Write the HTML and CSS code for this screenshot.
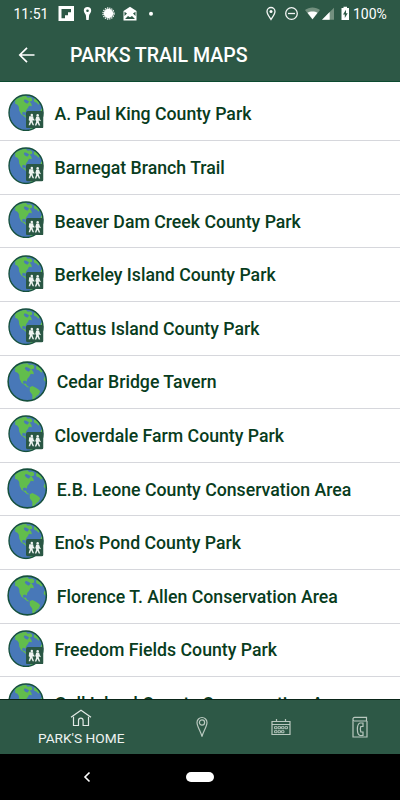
FILE: index.html
```html
<!DOCTYPE html>
<html lang="en">
<head>
<meta charset="utf-8">
<title>Parks Trail Maps</title>
<link rel="stylesheet" href="styles.css">
</head>
<body>
<svg class="defs" aria-hidden="true">
  <symbol id="globe" viewBox="0 0 40 40" preserveAspectRatio="none">
    <circle cx="20" cy="20" r="18.900" fill="#4878b8"/>
    <path fill="#62bd4c" d="M8 5.500 12 4 16 2.500 20 2.200 22 4 25 3.500 27 5 26.500 7.500 24 8 26 10.500 26.500 13 23.500 12.500 22 15 20 17.500 19.500 20 17.500 19 15.500 20 16.500 22.500 18.500 22 20 24.500 22.500 25.500 20 25.500 17.500 23.500 14.500 21.500 12.500 17.500 12 13.500 10.500 11.500 8 10.500Z"/>
    <path fill="#62bd4c" d="M22.500 25.500 25 24.500 28.500 26 31.500 28 32.700 29.500 31.500 32.500 29 34.500 26.500 37.500 25 37.500 25 33 22.500 29.500ZM29.500 4.500 32.500 6.500 35 10 34 11.500 31.500 9 29.500 8.500 28.500 6.500ZM37 15 38.500 18 37.800 20.500 36.200 18Z"/>
    <path fill="#4878b8" d="M18.500 5.500 21 6.500 23.500 8 21.500 10.500 19 9 17.500 7.500Z"/>
    <circle cx="20" cy="20" r="18.900" fill="none" stroke="#16503c" stroke-width="1.500"/>
  </symbol>
  <symbol id="hikers" viewBox="0 0 18 18">
    <rect width="18" height="18" rx="2" fill="#2a5744"/>
    <g fill="#eef3f0">
      <circle cx="6" cy="4" r="1.300"/><circle cx="12" cy="4.500" r="1.300"/>
      <path d="M3.300 5.500H7.300L7.800 8 9 9.300 8.300 10 6.900 9.200V11L8.300 14.700H6.800L5.400 11.500 4.200 14.700H2.700L4 10.300 2.800 9.500Z"/>
      <path d="M10.500 6H13.500L14.300 8.500 15.300 9.800 14.600 10.500 13.200 9.500V11L14.600 15H13.100L11.800 12 10.600 15H9.100L10.500 10.700 9.600 9Z"/>
    </g>
  </symbol>
</svg>
<div class="screen">
  <header class="top">
    <div class="status">
      <span class="clock">11:51</span>
      <svg class="status-left" viewBox="0 0 100 18">
        <rect x=".5" y="1" width="15.500" height="15" fill="#fff"/><path fill="#2d5846" d="M3.500 4H13V7.300H10V10.300H7V13.300H3.500Z"/>
        <path fill="#fff" fill-rule="evenodd" d="M29.500 2a3.700 3.700 0 0 1 3.700 3.700c0 2-1.800 3-2.100 4.700L30.700 15h-2.400L27.900 10.400C27.600 8.700 25.800 7.700 25.800 5.700A3.700 3.700 0 0 1 29.500 2Zm0 2.400a1.300 1.300 0 1 0 0 2.600 1.300 1.300 0 0 0 0-2.600Z"/>
        <circle cx="50.500" cy="8.500" r="4.700" fill="#fff"/><circle cx="50.500" cy="8.500" r="5.500" fill="none" stroke="#fff" stroke-width="1.300" stroke-dasharray="1.300 .86"/>
        <path fill="#fff" d="M65.500 6 72 1.700 78.500 6V15.500H65.500Z"/><path fill="#2d5846" d="M66.500 6.800 69 8.500 66.500 11ZM77.500 6.800 75 8.500 77.500 11ZM67 14 70 11 72 12.200 74 11 77 14Z"/>
        <circle cx="93" cy="8.700" r="2" fill="#fff"/>
      </svg>
      <svg class="status-right" viewBox="0 0 88 18">
        <g fill="none" stroke="#f4f6f5" stroke-width="1.300"><path d="M6 14.500C4 11.500 2 9 2 6.500a4 4 0 0 1 8 0C10 9 8 11.500 6 14.500Z"/><circle cx="26.500" cy="8.500" r="5.800"/><path d="M23 8.500h7"/></g><circle cx="6" cy="6.500" r="1.500" fill="#fff"/>
        <path fill="#73907f" d="M40 5C44 1.500 51 1.500 55 5L47.500 14.500Z"/><path fill="#fff" d="M42.500 7.700C45 6 50 6 52.500 7.700L47.500 14.300Z"/>
        <path fill="#73907f" d="M57 14.700 69 2.700V14.700Z"/><path fill="#fff" d="M57 14.700 64.700 7V14.700Z"/>
        <path fill="#fff" d="M76.500 3H78.500V1.800H82V3H84V15H76.500Z"/><path fill="#2d5846" d="M81 4.800 78 9.500H79.800V13L82.700 8.300H81Z"/>
      </svg>
      <span class="battery">100%</span>
    </div>
    <div class="bar">
      <svg class="back" viewBox="0 0 18 18"><path fill="none" stroke="#fff" stroke-width="1.700" d="M16.500 9H2M9 1.800 1.800 9 9 16.200"/></svg>
      <h1>PARKS TRAIL MAPS</h1>
    </div>
  </header>
  <main class="list">
    <div class="row"><div class="icon"><svg class="globe"><use href="#globe"/></svg><svg class="badge"><use href="#hikers"/></svg></div><span>A. Paul King County Park</span></div>
    <div class="row"><div class="icon"><svg class="globe"><use href="#globe"/></svg><svg class="badge"><use href="#hikers"/></svg></div><span>Barnegat Branch Trail</span></div>
    <div class="row"><div class="icon"><svg class="globe"><use href="#globe"/></svg><svg class="badge"><use href="#hikers"/></svg></div><span>Beaver Dam Creek County Park</span></div>
    <div class="row"><div class="icon"><svg class="globe"><use href="#globe"/></svg><svg class="badge"><use href="#hikers"/></svg></div><span>Berkeley Island County Park</span></div>
    <div class="row"><div class="icon"><svg class="globe"><use href="#globe"/></svg><svg class="badge"><use href="#hikers"/></svg></div><span>Cattus Island County Park</span></div>
    <div class="row plain"><div class="icon"><svg class="globe"><use href="#globe"/></svg></div><span>Cedar Bridge Tavern</span></div>
    <div class="row"><div class="icon"><svg class="globe"><use href="#globe"/></svg><svg class="badge"><use href="#hikers"/></svg></div><span>Cloverdale Farm County Park</span></div>
    <div class="row plain"><div class="icon"><svg class="globe"><use href="#globe"/></svg></div><span>E.B. Leone County Conservation Area</span></div>
    <div class="row"><div class="icon"><svg class="globe"><use href="#globe"/></svg><svg class="badge"><use href="#hikers"/></svg></div><span>Eno's Pond County Park</span></div>
    <div class="row plain"><div class="icon"><svg class="globe"><use href="#globe"/></svg></div><span>Florence T. Allen Conservation Area</span></div>
    <div class="row"><div class="icon"><svg class="globe"><use href="#globe"/></svg><svg class="badge"><use href="#hikers"/></svg></div><span>Freedom Fields County Park</span></div>
    <div class="row"><div class="icon"><svg class="globe"><use href="#globe"/></svg><svg class="badge"><use href="#hikers"/></svg></div><span>Gull Island County Conservation Area</span></div>
  </main>
  <nav class="tabs">
    <div class="tab home">
      <svg width="22" height="18" viewBox="0 0 22 18"><path d="M3.500 7.800V16.500H8.500V11.500a2.300 2.300 0 0 1 4.600 0V16.500H18.500V7.800M1 8.300 11 1.300 21 8.300" stroke="#e2e9e5"/></svg>
      <span>PARK'S HOME</span>
    </div>
    <div class="tab"><svg width="12" height="22" viewBox="0 0 12 22"><path d="M6 20.500C5 16 1 10.500 1 6.500a5 5 0 0 1 10 0C11 10.500 7 16 6 20.500Z"/><circle cx="6" cy="6.500" r="2.600"/></svg></div>
    <div class="tab"><svg width="20" height="18" viewBox="0 0 20 18"><path d="M1 3.500H19V16.500H1ZM1 6.500H19M5.500 1V4M14.500 1V4"/><path d="M3.500 8.700H6V10.700H3.500ZM7 8.700H9.500V10.700H7ZM10.500 8.700H13V10.700H10.500ZM14 8.700H16.500V10.700H14ZM3.500 12.700H6V14.700H3.500ZM7 12.700H9.500V14.700H7ZM10.500 12.700H13V14.700H10.500Z" stroke-width=".9"/></svg></div>
    <div class="tab"><svg width="16" height="22" viewBox="0 0 16 22"><path d="M1 2.500V21H15V5M1.500 5C.5 3 1 1.300 2.500 1.300H14.500V5H2"/><path d="M11 7H8C4.500 8 4.500 18.500 8 19.500H11V16H8.800C8 14 8 12.500 8.800 10.500H11Z"/></svg></div>
  </nav>
  <footer class="system">
    <svg class="sys-back" viewBox="0 0 8 12"><path d="M6.500 1.500 2 6 6.500 10.500" fill="none" stroke="#fff" stroke-width="1.600"/></svg>
    <div class="pill"></div>
  </footer>
</div>
</body>
</html>
```
FILE: styles.css
```css
* { box-sizing: border-box; }
body { margin: 0; font-family: Roboto, "Liberation Sans", sans-serif; background: #fff; }
svg { display: block; flex: none; }
.defs { position: absolute; width: 0; height: 0; }
.screen { display: flex; flex-direction: column; width: 400px; height: 800px; overflow: hidden; }
.top { flex: none; height: 82px; background: #2d5846; border-bottom: 1px solid #0c4a30; color: #fff; }
.status { display: flex; align-items: center; height: 28px; padding: 0 14px 0 13.500px; font-size: 14px; }
.clock { width: 44.500px; white-space: nowrap; }
.status-left { width: 100px; height: 18px; margin-top: -1px; }
.status-right { width: 88px; height: 18px; margin-left: auto; margin-top: -1px; }
.battery { width: 33px; font-size: 14px; white-space: nowrap; }
.bar { display: flex; align-items: center; height: 54px; padding-left: 18px; }
.back { width: 18px; height: 18px; margin-top: -1px; }
h1 { margin: 1px 0 0 34px; font-size: 19.600px; font-weight: 500; line-height: 24px; letter-spacing: -.03px; white-space: nowrap; }
.list { flex: 1; min-height: 0; overflow: hidden; padding-top: 5.700px; }
.row { display: flex; align-items: center; height: 53.600px; padding-left: 8px; border-bottom: 1px solid #d6d7dc; color: #083c20; font-size: 17.700px; font-weight: 500; white-space: nowrap; }
.icon { position: relative; width: 36px; height: 37.500px; margin-right: 10.500px; margin-top: -3px; flex: none; }
.row span { line-height: 22px; margin-top: 1px; }
.globe { width: 100%; height: 100%; }
.badge { position: absolute; left: 18px; top: 17px; width: 17.500px; height: 17.500px; }
.plain .icon { width: 40.500px; height: 41px; margin-left: -1px; margin-top: -1px; margin-right: 9.300px; }
.tabs { flex: none; display: flex; height: 54.500px; background: #2d5846; border-top: 1px solid #0a2418; color: #eef2f0; }
.tab { width: 79.500px; display: flex; flex-direction: column; align-items: center; justify-content: center; }
.tab svg { fill: none; stroke: #b9c8bf; stroke-width: 1.200; }
.tab.home { width: 163px; justify-content: flex-start; padding-top: 9px; }
.home span { margin-top: 2px; font-size: 13.700px; line-height: 18px; white-space: nowrap; }
.system { flex: none; display: flex; align-items: center; height: 46.500px; background: #000; padding-left: 83px; }
.sys-back { width: 8px; height: 12px; }
.pill { width: 28px; height: 10px; margin-left: 95px; border-radius: 5px; background: #fff; }
```
